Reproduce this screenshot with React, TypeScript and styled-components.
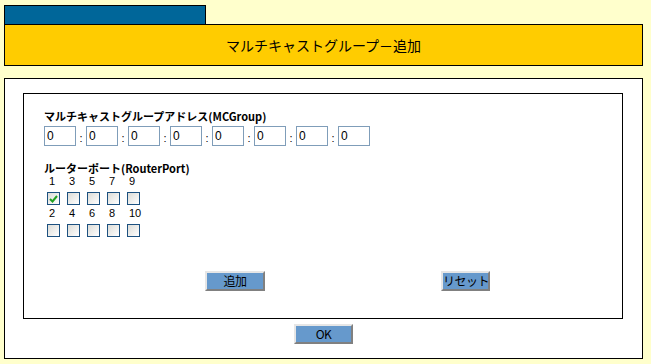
import React from "react";
import styled, { createGlobalStyle } from "styled-components";

const ports = [
    [1, 3, 5, 7, 9],
    [2, 4, 6, 8, 10],
];

const App: React.FC = () => {
    return (
        <>
            <GlobalStyle />
            <Page>
                <Tab />
                <Header>マルチキャストグループ－追加</Header>
                <Outer>
                    <Inner>
                        <Label>マルチキャストグループアドレス(MCGroup)</Label>
                        <AddressRow>
                            {Array.from({ length: 8 }).map((_, i) => (
                                <React.Fragment key={i}>
                                    {i > 0 && <Colon>:</Colon>}
                                    <AddrInput defaultValue="0" />
                                </React.Fragment>
                            ))}
                        </AddressRow>

                        <Label $top={16}>ルーターポート(RouterPort)</Label>
                        <PortGrid>
                            {ports.map((row, r) => (
                                <React.Fragment key={r}>
                                    {row.map((n) => (
                                        <PortNum key={`n${n}`}>{n}</PortNum>
                                    ))}
                                    {row.map((n) => (
                                        <Check key={`c${n}`}>
                                            {n === 1 && (
                                                <svg width="9" height="8" viewBox="0 0 9 8">
                                                    <path
                                                        d="M1 4 L3.5 6.5 L8 1"
                                                        fill="none"
                                                        stroke="#21a121"
                                                        strokeWidth="2"
                                                    />
                                                </svg>
                                            )}
                                        </Check>
                                    ))}
                                </React.Fragment>
                            ))}
                        </PortGrid>

                        <ButtonRow>
                            <Button $w={60}>追加</Button>
                            <Button $w={49}>リセット</Button>
                        </ButtonRow>
                    </Inner>
                    <OkRow>
                        <Button $w={59}>OK</Button>
                    </OkRow>
                </Outer>
            </Page>
        </>
    );
};

export default App;

const GlobalStyle = createGlobalStyle`
    body {
        margin: 0;
        background: #ffffcc;
        font-family: "Noto Sans CJK JP", "Liberation Sans", sans-serif;
    }
`;

const Page = styled.div`
    padding: 5px 8px 4px 4px;
    width: 639px;
`;

const Tab = styled.div`
    width: 200px;
    height: 18px;
    background: #006699;
    border: 1px solid #000;
    border-bottom: none;
`;

const Header = styled.div`
    height: 40px;
    background: #ffcc00;
    border: 1px solid #000;
    display: flex;
    align-items: center;
    justify-content: center;
    font-size: 14px;
    color: #000;
`;

const Outer = styled.div`
    margin-top: 12px;
    height: 281px;
    box-sizing: border-box;
    background: #fff;
    border: 1px solid #000;
    display: flex;
    flex-direction: column;
    padding: 14px 0 0 18px;
`;

const Inner = styled.div`
    width: 600px;
    height: 226px;
    border: 1px solid #000;
    padding: 16px 0 0 20px;
    box-sizing: border-box;
    display: flex;
    flex-direction: column;
`;

const Label = styled.div<{ $top?: number }>`
    margin-top: ${(p) => p.$top ?? 0}px;
    font-size: 11px;
    font-weight: bold;
    line-height: 12px;
    white-space: nowrap;
`;

const AddressRow = styled.div`
    display: flex;
    align-items: center;
    margin-top: 4px;
`;

const AddrInput = styled.input`
    width: 32px;
    height: 20px;
    box-sizing: border-box;
    border: 1px solid #7f9db9;
    padding: 0 0 0 2px;
    font-family: "Liberation Sans", sans-serif;
    font-size: 12px;
    color: #000;
    background: #fff;
`;

const Colon = styled.span`
    width: 10px;
    text-align: center;
    font-family: "Liberation Sans", sans-serif;
    font-size: 11px;
    padding-top: 4px;
`;

const PortGrid = styled.div`
    display: grid;
    grid-template-columns: repeat(5, 20px);
    margin: 1px 0 0 3px;
`;

const PortNum = styled.div`
    height: 12px;
    padding-left: 2px;
    font-family: "Liberation Sans", sans-serif;
    font-size: 11px;
    line-height: 12px;
`;

const Check = styled.div`
    width: 13px;
    height: 13px;
    margin: 5px 0 2px;
    box-sizing: border-box;
    border: 1px solid #1c5180;
    background: linear-gradient(135deg, #dcdcd7 0%, #ffffff 100%);
    display: flex;
    align-items: center;
    justify-content: center;
`;

const ButtonRow = styled.div`
    display: flex;
    gap: 176px;
    margin: 32px 0 0 161px;
`;

const Button = styled.button<{ $w: number }>`
    width: ${(p) => p.$w}px;
    height: 20px;
    padding: 0;
    background: #6699cc;
    border: 2px solid;
    border-color: #e6e6e6 #808080 #808080 #e6e6e6;
    font-family: "Noto Sans CJK JP", "Liberation Sans", sans-serif;
    font-size: 12px;
    line-height: 14px;
    letter-spacing: -0.5px;
    white-space: nowrap;
    color: #000;
`;

const OkRow = styled.div`
    margin: 5px 0 0 -18px;
    display: flex;
    justify-content: center;
`;
